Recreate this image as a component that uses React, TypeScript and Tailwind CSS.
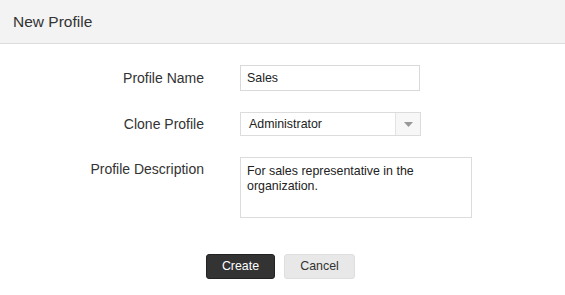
export default function App() {
  return (
    <div className="w-[565px] h-[295px] bg-white text-[#333]" style={{ fontFamily: '"Liberation Sans", Arial, sans-serif' }}>
      <div className="h-[44px] bg-[#f3f3f3] border-b border-[#dcdcdc] flex items-center pl-[13px]">
        <span className="text-[15.5px] text-[#333] leading-none">New Profile</span>
      </div>
      <div className="grid grid-cols-[204px_1fr] gap-x-[36px] gap-y-[21px] pt-[21px]">
        <div className="flex items-center justify-end h-[26px] text-[14px]">Profile Name</div>
        <div>
          <div className="w-[180px] h-[26px] border border-[#d9d9d9] flex items-center pl-[6px] text-[12.4px] text-[#222]">Sales</div>
        </div>

        <div className="flex items-center justify-end h-[24px] text-[14px]">Clone Profile</div>
        <div>
          <div className="w-[181px] h-[24px] border border-[#dcdcdc] flex text-[12.4px] text-[#222]">
            <div className="flex-1 flex items-center pl-[8px]">Administrator</div>
            <div className="w-[25px] border-l border-[#e3e3e3] bg-[#f7f7f7] flex items-center justify-center">
              <svg width="9" height="5" viewBox="0 0 9 5"><path d="M0 0 L9 0 L4.5 5 Z" fill="#999" /></svg>
            </div>
          </div>
        </div>

        <div className="flex justify-end text-[14px] pt-[4px] leading-[16px]">Profile Description</div>
        <div>
          <div className="w-[232px] h-[61px] border border-[#dcdcdc] pl-[6px] pt-[6px] pr-[6px] text-[12.4px] leading-[15px] text-[#222]">
            For sales representative in the organization.
          </div>
        </div>
      </div>
      <div className="flex justify-center gap-[9px] mt-[36px] pr-[4px]">
        <button className="w-[69px] h-[25px] bg-[#333] border border-[#222] rounded-[3px] text-white text-[12.4px]">Create</button>
        <button className="w-[71px] h-[25px] bg-[#e8e8e8] border border-[#dedede] rounded-[3px] text-[#333] text-[12.4px]">Cancel</button>
      </div>
    </div>
  );
}
